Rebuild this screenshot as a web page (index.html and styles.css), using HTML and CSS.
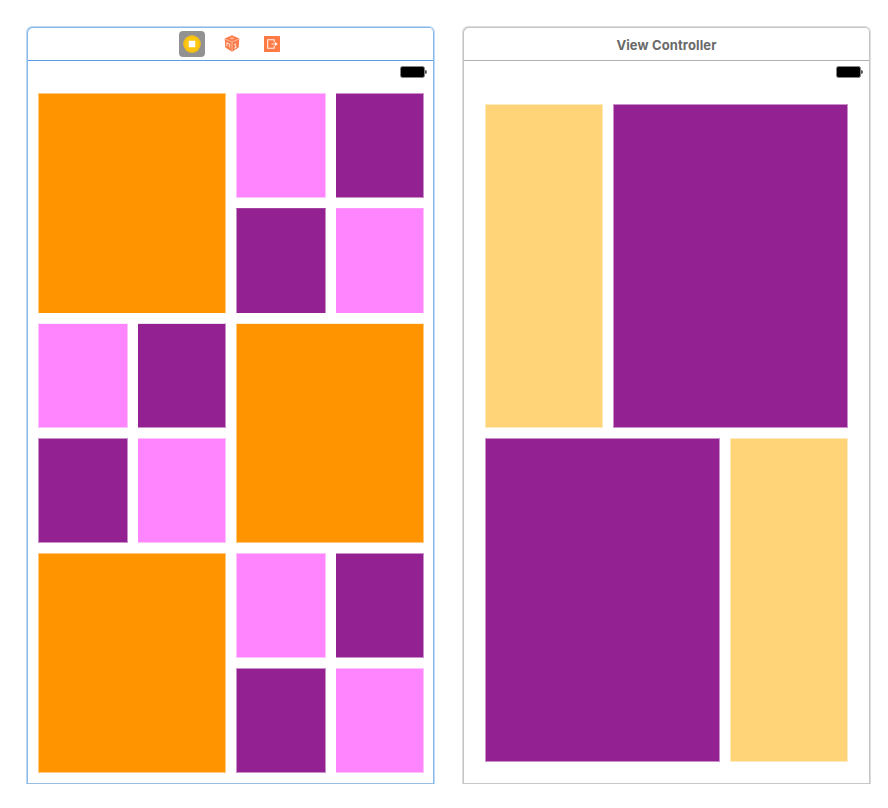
FILE: index.html
```html
<!DOCTYPE html>
<html lang="en">
<head>
<meta charset="utf-8">
<title>View Controller</title>
<link rel="stylesheet" href="styles.css">
</head>
<body>
<main class="canvas">
  <section class="scene selected">
    <header class="dock">
      <span class="dock-item active">
        <svg width="26" height="26" viewBox="0 0 26 26"><circle cx="13" cy="13" r="8.7" fill="#fdc60f"/><circle cx="13" cy="13" r="8" fill="none" stroke="#eeb81c" stroke-width="1"/><rect x="9.7" y="9.7" width="6.6" height="6.6" rx=".6" fill="#fff"/></svg>
      </span>
      <span class="dock-item">
        <svg width="16" height="17" viewBox="0 0 16 17"><path d="M8 .3 15.3 3.6 14.7 12.6 8 16.7 1.3 12.6.7 3.6Z" fill="#fa7d4b"/><path d="M.9 3.9 8 7l7.1-3.1M8 7v9.5" fill="none" stroke="#ffd0bc" stroke-width=".7"/><path d="M2.9 7.5v3.6M2.9 7.8l2.8 1.3v3.4M10 9.9l1.4-1.1v4M10 13.5l2.8-1.5" fill="none" stroke="#ffe9e0" stroke-width=".9"/><path d="M5.5 3.2 8 2.2l2.5 1L8 4.4Z" fill="#ffb698"/></svg>
      </span>
      <span class="dock-item">
        <svg width="16" height="16" viewBox="0 0 16 16"><rect width="16" height="16" fill="#ff7b45"/><path d="M10.2 6.2V3.8H3.7v8.4h6.5V9.8M7.5 8h4" fill="none" stroke="#ffeee7" stroke-width="1.1"/><path d="m11 6 2.8 2-2.8 2Z" fill="#fff"/></svg>
      </span>
    </header>
    <div class="status"><i class="battery"></i></div>
    <div class="board mosaic">
      <div class="tile orange top-band"></div>
      <div class="quad top-band"><div class="tile pink"></div><div class="tile purple"></div><div class="tile purple"></div><div class="tile pink"></div></div>
      <div class="quad mid-band"><div class="tile pink"></div><div class="tile purple"></div><div class="tile purple"></div><div class="tile pink"></div></div>
      <div class="tile orange mid-band"></div>
      <div class="tile orange"></div>
      <div class="quad"><div class="tile pink"></div><div class="tile purple"></div><div class="tile purple"></div><div class="tile pink"></div></div>
    </div>
  </section>
  <section class="scene">
    <header class="dock"><h1 class="title">View Controller</h1></header>
    <div class="status"><i class="battery"></i></div>
    <div class="board rows">
      <div class="row narrow-first"><div class="tile yellow"></div><div class="tile purple"></div></div>
      <div class="row wide-first"><div class="tile purple"></div><div class="tile yellow"></div></div>
    </div>
  </section>
</main>
</body>
</html>
```
FILE: styles.css
```css
* { box-sizing: border-box; }
body { margin: 0; background: #fff; font-family: Inter, "Liberation Sans", sans-serif; }
.canvas { display: flex; gap: 27px; width: 888px; height: 808px; padding: 26px 0 0 26px; }
.scene {
  --edge: #dedede;
  --inner: #c4c4c4;
  --line: #b0b0b0;
  display: flex;
  flex-direction: column;
  width: 409px;
  height: 758px;
  padding: 1px 1px 0;
  border: 1px solid var(--edge);
  border-bottom-color: #c8c8c8;
  border-radius: 6px 6px 0 0;
  box-shadow: inset 1px 1px var(--inner), inset -1px 0 var(--inner);
}
.selected { --edge: #c0daf6; --inner: #86b8ec; --line: #5b9fe6; border-bottom-color: #96bfe6; }
.dock {
  display: flex;
  align-items: center;
  justify-content: center;
  gap: 20px;
  height: 33px;
  padding-bottom: 1px;
  border-bottom: 1px solid var(--line);
}
.dock-item { display: flex; align-items: center; justify-content: center; width: 20px; height: 26px; }
.dock-item svg { flex: none; }
.active { width: 26px; margin-left: -1px; margin-right: -3px; border-radius: 4px; background: #929292; }
.title { margin: 2px 0 0; color: #696969; font-size: 13px; line-height: 18px; font-weight: 700; letter-spacing: .12px; }
.status { display: flex; justify-content: flex-end; height: 32px; padding: 6px 6px 0 0; }
.battery { display: flex; align-items: center; width: 27px; height: 10px; }
.battery::before {
  content: "";
  width: 25px;
  height: 10px;
  border: 1px solid #858585;
  border-radius: 2.5px;
  background: #000;
}
.battery::after { content: ""; width: 2px; height: 4px; background: #555; border-radius: 0 2px 2px 0; }
.board { display: grid; }
.mosaic { grid-template: repeat(3, 220px) / 188px 188px; gap: 10px; margin-left: 10px; }
.quad { display: grid; grid-template: 105px 105px / 90px 88px; gap: 10px; }
.rows { grid-template-rows: 324px 324px; gap: 10px; margin: 11px 0 0 21px; }
.row { display: grid; gap: 10px; }
.narrow-first { grid-template-columns: 118px 235px; }
.wide-first { grid-template-columns: 235px 118px; }
.tile { border: 1px solid rgba(255, 255, 255, .5); }
.quad .tile:nth-child(even) { border-left: 0; }
.tile.top-band, .top-band .tile:nth-child(n+3) { border-bottom: 0; }
.top-band .tile:nth-child(n+3) { border-top-color: rgba(255, 255, 255, .15); }
.tile.mid-band, .mid-band .tile:nth-child(-n+2) { border-top-color: rgba(255, 255, 255, .85); }
.orange { background-color: #ff9300; }
.pink { background-color: #ff85ff; }
.purple { background-color: #942192; }
.yellow { background-color: #ffd479; }
```
